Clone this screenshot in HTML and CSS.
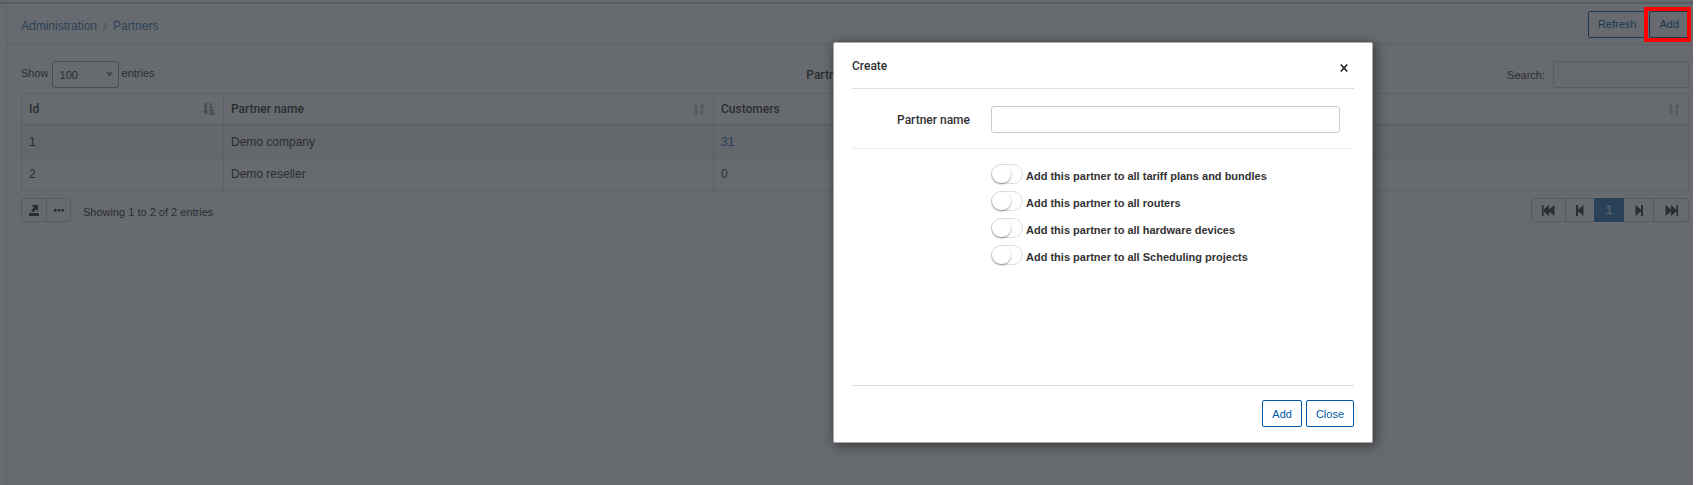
FILE: index.html
```html
<!DOCTYPE html>
<html lang="en">
<head>
<meta charset="utf-8">
<title>Partners</title>
<link rel="stylesheet" href="styles.css">
</head>
<body>
<svg width="0" height="0" class="sprite" aria-hidden="true">
  <symbol id="sort" viewBox="0 0 12 12"><path d="M1.800 0h2.400v8h1.800l-3 4-3-4h1.800zM7.800 12h2.400V4H12L9 0 6 4h1.800z"/></symbol>
  <symbol id="sort-asc" viewBox="0 0 12 12"><path d="M1.500 0h2.500v8h1.500l-2.700 4-2.800-4h1.500zM6.500 0h2v2.400h-2zM6.500 3.100h3v2.400h-3zM6.500 6.300h4.200v2.400H6.500zM6.500 9.500H12V12H6.500z"/></symbol>
  <symbol id="bar-prev" viewBox="0 0 8 11"><path d="M0 0h2v4.700L7.500 0v11L2 6.300V11H0z"/></symbol>
  <symbol id="bar-first" viewBox="0 0 13 11"><path d="M0 0h1.500v4.700L7 0v4.500L12.500 0v11L7 6.500V11L1.500 6.300V11H0z"/></symbol>
</svg>
<div class="page">
  <div class="topline"></div>
  <main class="content">
    <header class="header">
      <nav class="crumbs">
        <a href="#">Administration</a>
        <svg class="chevron" viewBox="0 0 4 8"><path d="M.5 .5L3.300 4 .5 7.500"/></svg>
        <a href="#">Partners</a>
      </nav>
      <div class="actions">
        <button class="btn" type="button">Refresh</button>
        <span class="highlight"><button class="btn" type="button">Add</button></span>
      </div>
    </header>
    <section class="list">
      <div class="toolbar">
        <div class="length">
          <label for="length">Show</label>
          <span class="select-box">
            <select id="length"><option>100</option></select>
            <svg class="caret" viewBox="0 0 8 5"><path d="M0 0h8L4 5z"/></svg>
          </span>
          <span class="unit">entries</span>
        </div>
        <h2 class="list-title">Partners list</h2>
        <div class="search">
          <label for="search">Search:</label>
          <input id="search" type="text">
        </div>
      </div>
      <table class="table">
        <colgroup><col class="col-id"><col class="col-wide"><col class="col-wide"><col></colgroup>
        <thead>
          <tr>
            <th><div class="th">Id<svg class="sort active"><use href="#sort-asc"/></svg></div></th>
            <th><div class="th">Partner name<svg class="sort"><use href="#sort"/></svg></div></th>
            <th><div class="th">Customers</div></th>
            <th><div class="th end"><svg class="sort"><use href="#sort"/></svg></div></th>
          </tr>
        </thead>
        <tbody>
          <tr><td>1</td><td>Demo company</td><td><a href="#">31</a></td><td></td></tr>
          <tr><td>2</td><td>Demo reseller</td><td>0</td><td></td></tr>
        </tbody>
      </table>
      <div class="bottom">
        <div class="info">
          <div class="group">
            <button type="button" aria-label="Export"><svg width="10" height="11" viewBox="0 0 10 11"><path d="M2.500 0H9v6.500L7 4.600 4.800 7H2.500V5.500L4.700 2.300zM0 8h10v3H0z"/></svg></button>
            <button type="button" aria-label="More"><svg width="10" height="3" viewBox="0 0 10 3"><path d="M0 0h2.600v2.500H0zM3.700 0h2.600v2.500H3.700zM7.400 0H10v2.500H7.400z"/></svg></button>
          </div>
          <span>Showing 1 to 2 of 2 entries</span>
        </div>
        <nav class="group pager">
          <button type="button" aria-label="First"><svg width="13" height="11"><use href="#bar-first"/></svg></button>
          <button type="button" aria-label="Previous"><svg width="8" height="11"><use href="#bar-prev"/></svg></button>
          <button type="button" class="current">1</button>
          <button type="button" aria-label="Next"><svg class="flip" width="8" height="11"><use href="#bar-prev"/></svg></button>
          <button type="button" aria-label="Last"><svg class="flip" width="13" height="11"><use href="#bar-first"/></svg></button>
        </nav>
      </div>
    </section>
  </main>
  <div class="overlay"></div>
  <form class="modal" role="dialog" aria-labelledby="modal-title">
    <div class="modal-head">
      <h1 id="modal-title">Create</h1>
      <button class="close" type="button" aria-label="Dismiss"><svg width="8" height="8" viewBox="0 0 8 8"><path d="M.8 .5l6.400 7M7.200 .5l-6.400 7"/></svg></button>
    </div>
    <div class="modal-body">
      <div class="field">
        <label for="name">Partner name</label>
        <input id="name" type="text">
      </div>
      <div class="toggles">
        <label><input type="checkbox"><span>Add this partner to all tariff plans and bundles</span></label>
        <label><input type="checkbox"><span>Add this partner to all routers</span></label>
        <label><input type="checkbox"><span>Add this partner to all hardware devices</span></label>
        <label><input type="checkbox"><span>Add this partner to all Scheduling projects</span></label>
      </div>
    </div>
    <div class="modal-foot">
      <button class="btn" type="button">Add</button>
      <button class="btn" type="button">Close</button>
    </div>
  </form>
</div>
</body>
</html>
```
FILE: styles.css
```css
* { box-sizing: border-box; }
body {
  margin: 0;
  background: #fff;
  color: #333;
  font: 12px/18px "Liberation Sans", Arial, sans-serif;
}
.sprite { position: absolute; }
a { color: #337ab7; text-decoration: none; }
button, input, select { font: inherit; color: inherit; }
svg { display: block; fill: currentColor; }

.page {
  position: relative;
  display: flex;
  flex-direction: column;
  min-height: 100vh;
  margin-right: 3px;
}
.topline {
  height: 4px;
  border-bottom: 2px solid #d0d0d0;
  background: #fafafa;
}
.content {
  flex: 1;
  margin-left: 6px;
  border-left: 1px solid #ddd;
}
.header {
  display: flex;
  justify-content: space-between;
  align-items: center;
  height: 41px;
  padding: 0 4px 0 14px;
  border-bottom: 1px solid #ddd;
}
.crumbs { display: flex; align-items: center; gap: 6px; padding-top: 4px; }
.chevron { width: 4px; height: 8px; fill: none; stroke: #337ab7; }
.actions { display: flex; gap: 3px; }
.btn {
  height: 27px;
  padding: 0 9px;
  border: 1px solid #0059a5;
  border-radius: 2px;
  background: #fff;
  color: #0059a5;
  font-size: 11px;
}
.highlight { position: relative; }
.highlight::after {
  content: "";
  position: absolute;
  inset: -4px -2px -4px -5px;
  border: 4px solid #f00;
  z-index: 3;
}

.list { padding: 16px 4px 0 14px; font-size: 11px; }
.toolbar {
  display: grid;
  grid-template-columns: 1fr auto 1fr;
  align-items: center;
  margin-bottom: 5px;
}
.length, .search { display: flex; align-items: center; gap: 8px; }
.length { gap: 3px; }
.length label, .unit { padding-bottom: 3px; }
.search { justify-content: flex-end; }
.list-title { margin: 0; padding-right: 32px; font: 500 12px/18px Roboto, sans-serif; }
.select-box { position: relative; }
.select-box select {
  display: block;
  appearance: none;
  width: 67px;
  height: 27px;
  padding: 1px 7px 0;
  border: 1px solid #999;
  border-radius: 3px;
  background: #fff;
}
.caret {
  position: absolute;
  right: 6px;
  top: 11px;
  width: 7px;
  height: 5px;
  color: #888;
}
.search input {
  width: 136px;
  height: 27px;
  border: 1px solid #ccc;
  border-radius: 3px;
}

.table {
  width: 100%;
  table-layout: fixed;
  border-collapse: collapse;
  font-size: 12px;
}
.col-id { width: 202px; }
.col-wide { width: 490px; }
.table th, .table td { border: 1px solid #ddd; padding: 7px; text-align: left; }
.table th { padding: 6px 8px 6px 7px; border-bottom-width: 2px; font: 500 12px/18px Roboto, sans-serif; }
.table td { line-height: 17px; }
.table tbody tr:first-child td { line-height: 18px; }
.table tbody tr:nth-child(odd) { background: #f5f5f5; }
.th { display: flex; justify-content: space-between; align-items: center; }
.th.end { justify-content: flex-end; }
.sort { width: 12px; height: 12px; color: #ccc; }
.sort.active { color: #999; }

.bottom { display: flex; justify-content: space-between; margin-top: 7px; }
.info { display: flex; align-items: center; gap: 12px; }
.info > span { padding-top: 4px; }
.group { display: flex; border: 1px solid #ccc; border-radius: 3px; }
.group button {
  display: grid;
  place-items: center;
  width: 24px;
  height: 22px;
  padding: 0;
  border: 0;
  background: none;
}
.group button + button { border-left: 1px solid #ccc; }
.pager button { width: 29px; }
.pager button:first-child { width: 33px; }
.pager button:last-child { width: 35px; }
.pager button.current { height: 24px; width: 30px; margin: -1px 0; border: 0; background: #337ab7; color: #fff; font-size: 12px; }
.pager button.current + button { border-left: 0; }
.flip { transform: scaleX(-1); }

.overlay {
  position: absolute;
  inset: 0;
  background: rgba(39, 43, 48, 0.7);
  z-index: 1;
}
.modal {
  position: absolute;
  top: 42px;
  left: 833px;
  z-index: 4;
  display: flex;
  flex-direction: column;
  width: 540px;
  height: 401px;
  padding: 0 18px;
  border: 1px solid #aaa;
  border-radius: 2px;
  background: #fff;
  box-shadow: 2px 2px 12px rgba(0, 0, 0, 0.5);
}
.modal-head {
  display: flex;
  justify-content: space-between;
  align-items: center;
  height: 46px;
  padding-right: 5px;
  border-bottom: 1px solid #ddd;
}
.modal-head h1 { margin: 0; font: 500 12px/18px Roboto, sans-serif; }
.close { padding: 4px 1px 0; border: 0; background: none; color: #222; }
.close svg { fill: none; stroke: currentColor; stroke-width: 1.6; }
.modal-body { flex: 1; }
.field {
  display: flex;
  align-items: center;
  gap: 21px;
  height: 60px;
  padding: 2px 14px 0 0;
  border-bottom: 1px solid #eee;
}
.field label { width: 118px; text-align: right; font: 500 12px/18px Roboto, sans-serif; }
.field input {
  flex: 1;
  height: 27px;
  border: 1px solid #ccc;
  border-radius: 3px;
}
.toggles { display: flex; flex-direction: column; gap: 7px; padding: 15px 0 0 139px; }
.toggles label { display: flex; gap: 3px; height: 20px; font-size: 11px; font-weight: bold; }
.toggles span { padding-top: 4px; line-height: 16px; }
.toggles input {
  appearance: none;
  width: 32px;
  height: 20px;
  margin: 0;
  border: 1px solid #ddd;
  border-radius: 10px;
}
.toggles input::before {
  content: "";
  display: block;
  width: 19px;
  height: 18px;
  border-radius: 9px;
  background: #fff;
  box-shadow: 0 1px 2px rgba(0, 0, 0, 0.4);
}
.modal-foot {
  display: flex;
  justify-content: flex-end;
  gap: 4px;
  padding: 14px 0 15px;
  border-top: 1px solid #ddd;
}
```
